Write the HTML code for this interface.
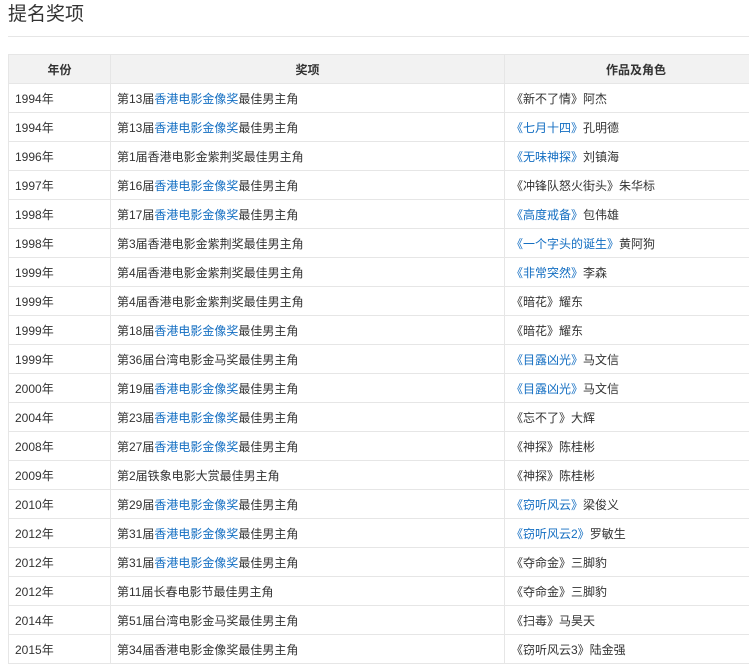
<!DOCTYPE html>
<html><head><meta charset="utf-8"><style>
body{margin:0;background:#fff;font-family:"Liberation Sans","Noto Sans CJK SC",sans-serif;color:#333;width:749px;height:668px;overflow:hidden}
h2{position:absolute;left:8px;top:2px;margin:0;font-size:19px;font-weight:normal;color:#333;line-height:26px}
.hr{position:absolute;left:8px;top:36px;width:741px;height:1px;background:#e6e6e6}
table{position:absolute;left:8px;top:54px;border-collapse:collapse;width:760px;font-size:12px}
td,th{border:1px solid #e6e6e6;height:28px;padding:0 0 0 6px;text-align:left;white-space:nowrap}
th{background:#f2f2f2;font-weight:bold;text-align:center;padding:0}
a{color:#136ec2;text-decoration:none}
</style></head><body>
<h2>提名奖项</h2><div class="hr"></div>
<table>
<tr><th style="width:101px">年份</th><th style="width:393px">奖项</th><th>作品及角色</th></tr>
<tr><td>1994年</td><td>第13届<a>香港电影金像奖</a>最佳男主角</td><td>《新不了情》阿杰</td></tr>
<tr><td>1994年</td><td>第13届<a>香港电影金像奖</a>最佳男主角</td><td><a>《七月十四》</a>孔明德</td></tr>
<tr><td>1996年</td><td>第1届香港电影金紫荆奖最佳男主角</td><td><a>《无味神探》</a>刘镇海</td></tr>
<tr><td>1997年</td><td>第16届<a>香港电影金像奖</a>最佳男主角</td><td>《冲锋队怒火街头》朱华标</td></tr>
<tr><td>1998年</td><td>第17届<a>香港电影金像奖</a>最佳男主角</td><td><a>《高度戒备》</a>包伟雄</td></tr>
<tr><td>1998年</td><td>第3届香港电影金紫荆奖最佳男主角</td><td><a>《一个字头的诞生》</a>黄阿狗</td></tr>
<tr><td>1999年</td><td>第4届香港电影金紫荆奖最佳男主角</td><td><a>《非常突然》</a>李森</td></tr>
<tr><td>1999年</td><td>第4届香港电影金紫荆奖最佳男主角</td><td>《暗花》耀东</td></tr>
<tr><td>1999年</td><td>第18届<a>香港电影金像奖</a>最佳男主角</td><td>《暗花》耀东</td></tr>
<tr><td>1999年</td><td>第36届台湾电影金马奖最佳男主角</td><td><a>《目露凶光》</a>马文信</td></tr>
<tr><td>2000年</td><td>第19届<a>香港电影金像奖</a>最佳男主角</td><td><a>《目露凶光》</a>马文信</td></tr>
<tr><td>2004年</td><td>第23届<a>香港电影金像奖</a>最佳男主角</td><td>《忘不了》大辉</td></tr>
<tr><td>2008年</td><td>第27届<a>香港电影金像奖</a>最佳男主角</td><td>《神探》陈桂彬</td></tr>
<tr><td>2009年</td><td>第2届铁象电影大赏最佳男主角</td><td>《神探》陈桂彬</td></tr>
<tr><td>2010年</td><td>第29届<a>香港电影金像奖</a>最佳男主角</td><td><a>《窃听风云》</a>梁俊义</td></tr>
<tr><td>2012年</td><td>第31届<a>香港电影金像奖</a>最佳男主角</td><td><a>《窃听风云2》</a>罗敏生</td></tr>
<tr><td>2012年</td><td>第31届<a>香港电影金像奖</a>最佳男主角</td><td>《夺命金》三脚豹</td></tr>
<tr><td>2012年</td><td>第11届长春电影节最佳男主角</td><td>《夺命金》三脚豹</td></tr>
<tr><td>2014年</td><td>第51届台湾电影金马奖最佳男主角</td><td>《扫毒》马昊天</td></tr>
<tr><td>2015年</td><td>第34届香港电影金像奖最佳男主角</td><td>《窃听风云3》陆金强</td></tr>
</table>
</body></html>
